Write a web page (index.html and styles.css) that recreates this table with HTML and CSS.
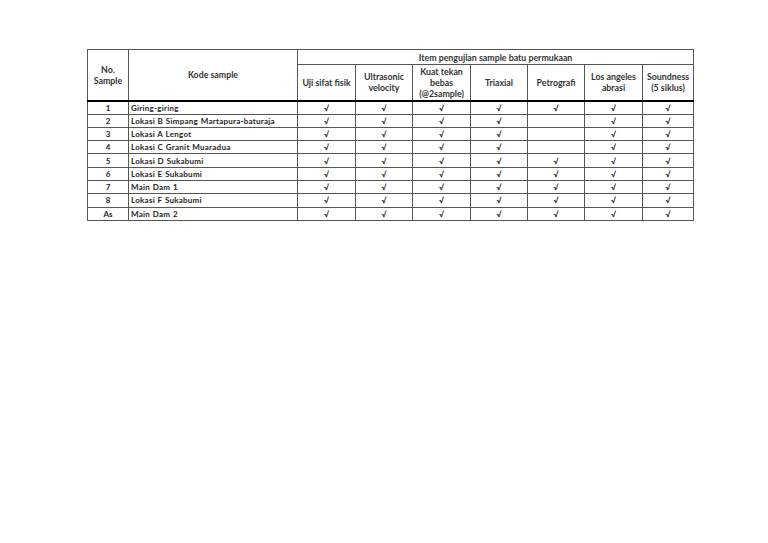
FILE: index.html
```html
<!DOCTYPE html>
<html>
<head>
<meta charset="utf-8">
<link rel="stylesheet" href="styles.css">
</head>
<body>
<table class="grid">
  <colgroup>
    <col class="c-no"><col class="c-kode">
    <col class="c-a"><col class="c-b"><col class="c-c"><col class="c-d"><col class="c-e"><col class="c-f"><col class="c-g">
  </colgroup>
  <thead>
    <tr class="h1">
      <th rowspan="2" class="bt">No.<br>Sample</th>
      <th rowspan="2" class="bt">Kode sample</th>
      <th colspan="7">Item pengujian sample batu permukaan</th>
    </tr>
    <tr class="h2">
      <th class="bt">Uji sifat fisik</th>
      <th class="bt">Ultrasonic<br>velocity</th>
      <th class="bt">Kuat tekan<br>bebas<br>(@2sample)</th>
      <th class="bt">Triaxial</th>
      <th class="bt">Petrografi</th>
      <th class="bt">Los angeles<br>abrasi</th>
      <th class="bt">Soundness<br>(5 siklus)</th>
    </tr>
  </thead>
  <tbody>
    <tr><td class="n">1</td><td class="k">Giring-giring</td><td>√</td><td>√</td><td>√</td><td>√</td><td>√</td><td>√</td><td>√</td></tr>
    <tr><td class="n">2</td><td class="k">Lokasi B Simpang Martapura-baturaja</td><td>√</td><td>√</td><td>√</td><td>√</td><td></td><td>√</td><td>√</td></tr>
    <tr><td class="n">3</td><td class="k">Lokasi A Lengot</td><td>√</td><td>√</td><td>√</td><td>√</td><td></td><td>√</td><td>√</td></tr>
    <tr><td class="n">4</td><td class="k">Lokasi C Granit Muaradua</td><td>√</td><td>√</td><td>√</td><td>√</td><td></td><td>√</td><td>√</td></tr>
    <tr><td class="n">5</td><td class="k">Lokasi D Sukabumi</td><td>√</td><td>√</td><td>√</td><td>√</td><td>√</td><td>√</td><td>√</td></tr>
    <tr><td class="n">6</td><td class="k">Lokasi E Sukabumi</td><td>√</td><td>√</td><td>√</td><td>√</td><td>√</td><td>√</td><td>√</td></tr>
    <tr><td class="n">7</td><td class="k">Main Dam 1</td><td>√</td><td>√</td><td>√</td><td>√</td><td>√</td><td>√</td><td>√</td></tr>
    <tr><td class="n">8</td><td class="k">Lokasi F Sukabumi</td><td>√</td><td>√</td><td>√</td><td>√</td><td>√</td><td>√</td><td>√</td></tr>
    <tr><td class="n">As</td><td class="k">Main Dam 2</td><td>√</td><td>√</td><td>√</td><td>√</td><td>√</td><td>√</td><td>√</td></tr>
  </tbody>
</table>
</body>
</html>
```
FILE: styles.css
```css
html, body {
  margin: 0;
  padding: 0;
  background: #ffffff;
}
body {
  padding: 49px 0 0 87px;
  font-family: Lato, "Liberation Sans", sans-serif;
  color: #1e1e1e;
}
.grid {
  border-collapse: collapse;
  table-layout: fixed;
  width: 606px;
  font-size: 8.8px;
  line-height: 11px;
}
.c-no { width: 41px; }
.c-kode { width: 169px; }
.c-a { width: 58px; }
.c-b { width: 57px; }
.c-c { width: 58px; }
.c-d { width: 57px; }
.c-e { width: 57px; }
.c-f { width: 58px; }
.c-g { width: 51px; }
.grid th, .grid td {
  border: 1px solid #555;
  padding: 0;
  text-align: center;
  vertical-align: middle;
  overflow: hidden;
  white-space: nowrap;
}
.grid th {
  font-weight: 700;
  color: #333;
}
.grid .bt {
  border-bottom: 2px solid #000;
}
.h1 { height: 15px; }
.h2 { height: 36px; }
.grid tbody tr { height: 13.3px; }
.grid td {
  font-weight: 700;
  font-size: 8px;
  line-height: 12px;
}
.grid td.k {
  text-align: left;
  padding-left: 2px;
  letter-spacing: 0.25px;
  word-spacing: 0.5px;
}
```
